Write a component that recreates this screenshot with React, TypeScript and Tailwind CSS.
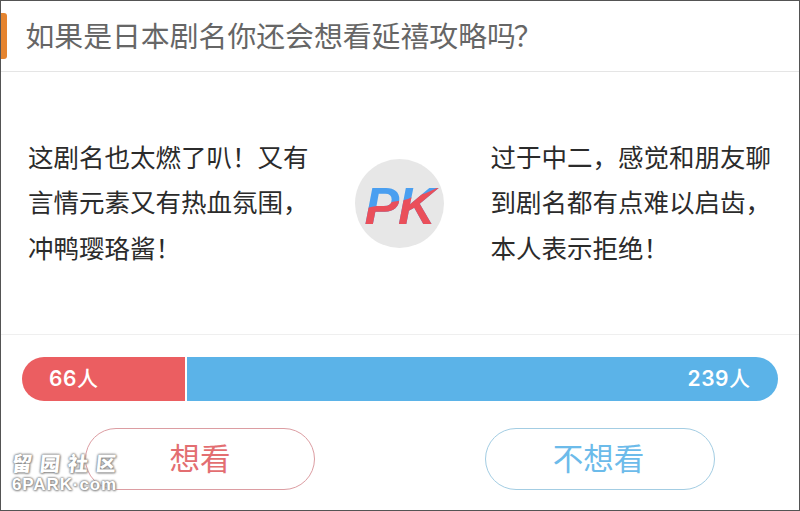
import React from 'react';

interface OpinionProps {
    lines: string[];
    className?: string;
}

interface VoteButtonProps {
    label: string;
    className: string;
}

const leftVotes = 66;
const rightVotes = 239;

const Opinion: React.FC<OpinionProps> = ({ lines, className = '' }) => (
    <div className={`text-[25.5px] leading-[45.5px] text-[#2b2b2b] whitespace-nowrap ${className}`}>
        {lines.map((line) => (
            <p key={line}>{line}</p>
        ))}
    </div>
);

// Two-tone PK badge, blue on top and red below the wave
const PkBadge: React.FC = () => (
    <svg width="90" height="90" viewBox="0 0 90 90" className="shrink-0">
        <defs>
            <clipPath id="pk-lower">
                <path d="M0 51 L12 50.5 C20 47 29 48.5 36 45 C41 42 49 44 57 39.5 C64 38 66 36 71 35.5 L85 29 H90 V90 H0 Z" />
            </clipPath>
        </defs>
        <circle cx="45.5" cy="45.5" r="44.5" fill="#e7e7e7" />
        <g
            fontFamily="Liberation Sans, Arial, sans-serif"
            fontWeight="700"
            fontStyle="italic"
            fontSize="52"
        >
            <g fill="#4a9ff0">
                <text x="10.5" y="66">P</text>
                <text x="44" y="66">K</text>
            </g>
            <g fill="#ea4f5a" clipPath="url(#pk-lower)">
                <text x="10.5" y="66">P</text>
                <text x="44" y="66">K</text>
            </g>
        </g>
    </svg>
);

const VoteButton: React.FC<VoteButtonProps> = ({ label, className }) => (
    <button
        type="button"
        className={`flex h-[62px] w-[230px] items-center justify-center rounded-full border pb-[4px] text-[30.5px] leading-none ${className}`}
    >
        {label}
    </button>
);

const Watermark: React.FC = () => (
    <div className="absolute left-[11px] top-[451px] w-[110px] text-white [text-shadow:0_0_2px_#888,0_0_2px_#888,0_0_3px_#999,1px_1px_2px_#aaa]">
        <div className="h-[24px] -skew-x-6 text-[20px] font-black leading-[22px] tracking-[8px] whitespace-nowrap">留园社区</div>
        <div className="font-['Liberation_Sans',sans-serif] text-[17px] font-bold leading-[17px] tracking-[0.9px] whitespace-nowrap">
            6PARK·com
        </div>
    </div>
);

const App: React.FC = () => {
    return (
        <div
            lang="zh-CN"
            className="relative flex h-[511px] w-[800px] flex-col overflow-hidden border border-[#545454] bg-white font-['Noto_Sans_CJK_SC',sans-serif]"
        >
            <header className="flex h-[71px] shrink-0 items-center border-b border-[#e5e5e5]">
                <span className="h-[46px] w-[6px] rounded-r-[3px] bg-[#e5842f]" />
                <h1 className="ml-[18.5px] pb-[3px] text-[28.85px] leading-[40px] text-[#666]">
                    如果是日本剧名你还会想看延禧攻略吗<span className="-ml-[2px]">？</span>
                </h1>
            </header>

            <section className="flex h-[263px] shrink-0 items-center border-b border-[#efefef] pl-[27px]">
                <Opinion
                    className="w-[326px] pb-[4px]"
                    lines={['这剧名也太燃了叭！又有', '言情元素又有热血氛围，', '冲鸭璎珞酱！']}
                />
                <PkBadge />
                <Opinion
                    className="ml-[46.5px] pb-[4px]"
                    lines={['过于中二，感觉和朋友聊', '到剧名都有点难以启齿，', '本人表示拒绝！']}
                />
            </section>

            <section className="px-[21px] pt-[22px]">
                <div className="flex h-[44px] gap-[2px] overflow-hidden rounded-full text-[21px] font-medium text-white">
                    <div className="flex w-[163px] items-center bg-[#eb5e61] pl-[27px]">
                        <span className="pb-px font-['Inter','Noto_Sans_CJK_SC',sans-serif] tracking-[0.5px]">
                            <b className="font-semibold">{leftVotes}</b>人
                        </span>
                    </div>
                    <div className="flex flex-1 items-center justify-end bg-[#5bb3e8] pr-[27.5px]">
                        <span className="pb-px font-['Inter','Noto_Sans_CJK_SC',sans-serif] tracking-[0.5px]">
                            <b className="font-semibold">{rightVotes}</b>人
                        </span>
                    </div>
                </div>
                <div className="mt-[27px] flex justify-between pl-[63px] pr-[63px]">
                    <VoteButton label="想看" className="border-[#dc9da2] text-[#e36e71]" />
                    <VoteButton label="不想看" className="border-[#a3cde3] pr-[3px] text-[#6cbbea]" />
                </div>
            </section>

            <Watermark />
        </div>
    );
};

export default App;
